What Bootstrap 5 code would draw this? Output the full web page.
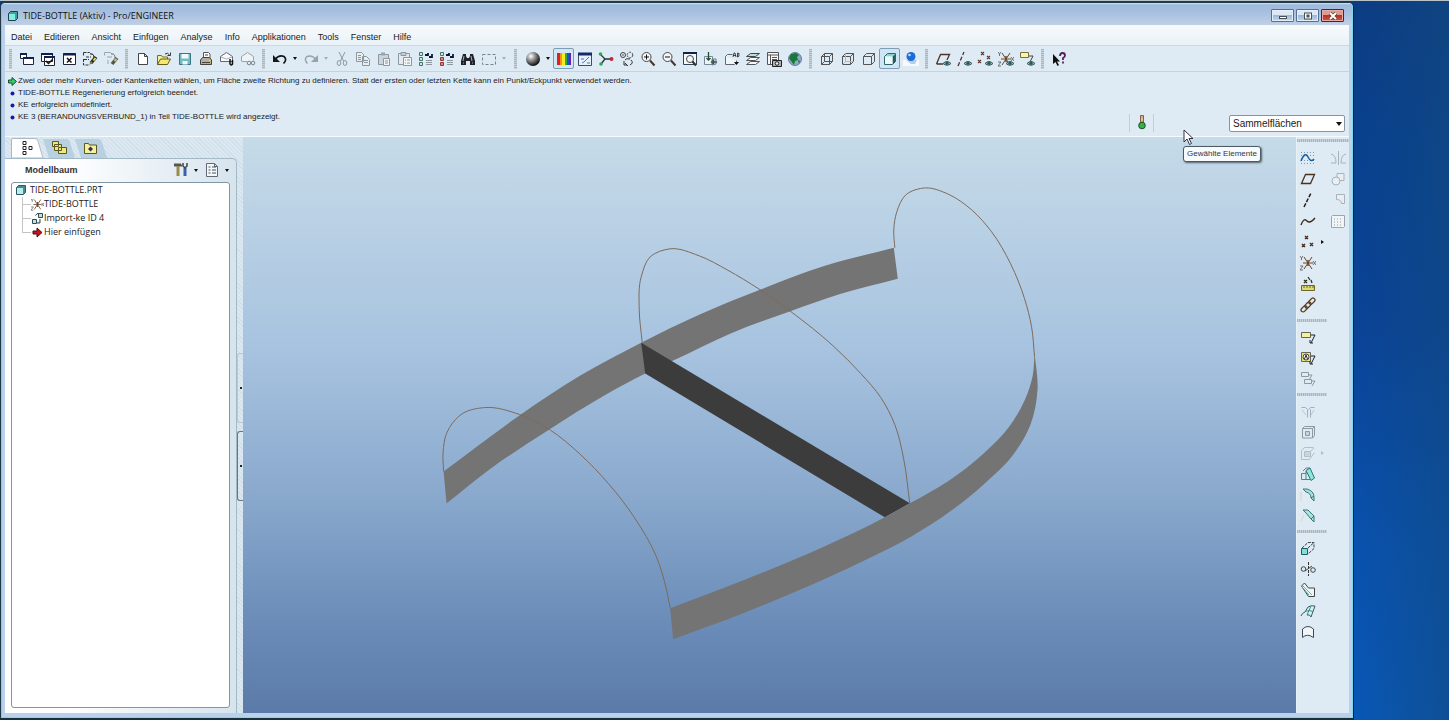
<!DOCTYPE html>
<html lang="de">
<head>
<meta charset="utf-8">
<meta name="viewport" content="width=device-width, initial-scale=1">
<title>TIDE-BOTTLE (Aktiv) - Pro/ENGINEER</title>
<link href="https://cdn.jsdelivr.net/npm/bootstrap@5.3.0/dist/css/bootstrap.min.css" rel="stylesheet">
<style>
  body { font-family: "Liberation Sans", Arial, sans-serif; font-size: 9px; line-height: 12px; color: #222; overflow: hidden;
    background: linear-gradient(to right, rgba(14,72,140,0) 93%, rgba(18,74,128,.6) 100%), linear-gradient(#0c3b82 0, #08408f 20%, #0a4298 45%, #0852b0 75%, #0858b8 100%); }
  .desk { border-top: 1px solid #b8c4c8; padding: 1px 95px 0 0; }
  .win { border: 1px solid #203848; border-bottom: 2px solid #16303c; border-right-color: #08203c; border-radius: 5px 5px 0 0; background: #b9d1ea; padding: 0 4px 5px 4px; box-shadow: inset -1px -1px 0 #7fd8f0, inset 1px 0 0 #a8bcd4; }
  .titlebar { height: 22px; margin: 0 -3px; padding: 3px 8px 0 5px; gap: 3px; border-radius: 4px 4px 0 0; background: linear-gradient(#dfe9f5 0, #9db9dc 8%, #aac2e0 50%, #bfd0e6 100%); }
  .titlebar h1 { font: 9px/16px "Open Sans", sans-serif; color: #111; padding-left: 1px; }
  .capbtns { gap: 2px; }
  .capbtn { width: 23px; height: 13px; padding: 0; border: 1px solid #536f94; border-radius: 1px; line-height: 0; background: linear-gradient(#dce8f5 45%, #9db8d8 50%, #c4d8ee); box-shadow: inset 0 0 0 1px #e4eef8; }
  .capclose { border-color: #5a2020; background: linear-gradient(#e09a90 45%, #b83228 50%, #d0564a); box-shadow: inset 0 0 0 1px #e8aaa4; }
  .menubar { height: 21px; background: linear-gradient(#f6fafc, #eaf2f7); border-bottom: 1px solid #cdd8e0; }
  .menubar a { color: #222; text-decoration: none; padding: 0 6px; line-height: 24px; }
  .toolbar { height: 26px; background: #deebf4; border-bottom: 1px solid #c6d2dc; }
  .grip { width: 11px; flex: none; }
  .grip::before { content: ""; display: block; width: 3px; height: 20px; margin: 0 auto; background: repeating-linear-gradient(#a8b6c0 0 1px, #c6d1d9 1px 2px); }
  .gripwide { width: 13px; }
  .tool { width: 21px; height: 21px; padding: 0; border: 1px solid transparent; background: none; line-height: 0; flex: none; display: flex; align-items: center; justify-content: center; }
  .tool.on { border-color: #7e9cb4; background: #cfe6f6; border-radius: 2px; }
  .drop { width: 10px; height: 21px; flex: none; padding: 0; border: 0; background: none; display: flex; align-items: center; justify-content: center; }
  .drop::after { content: ""; border: 2px solid transparent; border-top: 3px solid #111; border-bottom: 0; }
  .drop:disabled::after { border-top-color: #a6b0b8; }
  .messages { height: 65px; background: #deebf4; border-bottom: 1px solid #f4fafd; padding: 3px 4px 0 3px; }
  .messages ul { font-size: 8px; line-height: 12px; }
  .messages li { display: flex; align-items: center; gap: 1px; height: 12px; }
  .bullet { width: 9px; flex: none; line-height: 0; text-align: center; }
  .lamp { width: 25px; height: 18px; border-left: 1px solid #c2ced8; border-right: 1px solid #c2ced8; margin-right: 75px; text-align: center; line-height: 0; }
  .filter { width: 116px; height: 17px; padding: 0 3px; border: 1px solid #8794a0; border-radius: 2px; font-size: 10px; line-height: 15px; color: #222; appearance: none; background: #fff; }
  .filterbox { position: relative; line-height: 0; }
  .filterbox::after { content: ""; position: absolute; right: 3px; top: 7px; border: 3px solid transparent; border-top: 4px solid #111; border-bottom: 0; }
  svg { fill: none; stroke-width: 1; flex: none; }
  .tipwrap { position: absolute; right: 92px; top: 126px; width: 78px; z-index: 3; line-height: 0; }
  .tip { height: 16px; background: #f8fbfd; border: 1px solid #4c5a66; border-radius: 3px; box-shadow: 1px 1px 2px #54606c; font-size: 8px; line-height: 14px; text-align: center; white-space: nowrap; color: #334; }
  .side { width: 238px; background: repeating-linear-gradient(45deg, #d0e0ea 0 1px, #dbe8f1 1px 3px); }
  .tabs { height: 21px; padding: 1px 0 0 6px; }
  .tabs button { border: 0; background: none; padding: 0; width: 32px; height: 20px; line-height: 0; }
  .panel { border: 1px solid #a4b8c6; border-left: 0; border-bottom: 0; border-radius: 0 5px 0 0; margin-right: 6px; background: linear-gradient(to right, #fff, #fff 25%, #d6e4ee); }
  .phead { height: 22px; padding: 0 4px 0 20px; }
  .phead h2 { font-size: 9px; line-height: 22px; font-weight: bold; color: #333; }
  .tree { margin: 1px 6px 5px 6px; background: #fff; border: 1px solid #8394a2; border-radius: 3px; font: 9px/14px "Open Sans", "Noto Sans", sans-serif; color: #222; }
  .treerow { height: 14px; display: flex; align-items: center; white-space: nowrap; }
  .branch { padding-left: 10px; }
  .branch::before { content: ""; width: 9px; height: 14px; border-left: 1px solid #c4c4c4; background: linear-gradient(#c4c4c4, #c4c4c4) no-repeat 0 7px / 9px 1px; }
  .branch:last-child::before { height: 8px; align-self: flex-start; }
  .handles { width: 6px; margin-left: -6px; padding-top: 216px; gap: 8px; z-index: 1; }
  .handle { width: 6px; border: 1px solid #b8c8d4; border-right: 0; border-radius: 3px 0 0 3px; height: 70px; display: flex; align-items: center; justify-content: center; }
  .handle::after { content: ""; width: 2px; height: 2px; background: #222; }
  .scene { background: linear-gradient(#c6dbe8 0, #bcd3e6 12%, #a6c2df 38%, #8aa9cd 62%, #6d8fba 82%, #5b7aa8 100%); min-width: 0; line-height: 0; }
  .rail { width: 53px; background: #deebf4; padding-top: 2px; border-left: 1px solid #e8f1f6; }
  .railmain { width: 30px; }
  .hgrip { height: 3px; margin: 4px 0; background: repeating-linear-gradient(to right, #a8b6c0 0 1px, #c6d1d9 1px 2px); }
  .hgrip:first-child { margin: 0 0 5px; }
  .hgrip:first-child + .tool { margin-top: 0; }
  .fly { width: 8px; padding: 0; border: 0; background: none; display: flex; align-items: center; justify-content: center; }
  .fly::after { content: ""; border: 2px solid transparent; border-left: 3px solid #111; border-right: 0; }
  .fly:disabled::after { border-left-color: #b4bec6; }
</style>
</head>
<body>
<svg width="0" height="0" class="position-absolute" aria-hidden="true">
  <defs>
    <symbol id="eye" viewBox="0 0 8 5"><path d="M0 2.500Q4-1.500 8 2.500Q4 6 0 2.500Z" fill="#9bbab8" stroke="#456"/><circle cx="4" cy="2.300" r="1.600" fill="#14664e"/></symbol>
    <symbol id="csys" viewBox="0 0 16 16"><path d="M4 2l8 12M12 2L4 14M3 8h10" stroke="#6b4326"/><path d="M8 5v6" stroke="#6b4326" stroke-width="1.500"/><path d="M0 1l1.500 2L3 1M1.500 3v2M0 11h3l-3 4h3M13 6l3 4M16 6l-3 4" stroke="#555" stroke-width=".8"/></symbol>
    <symbol id="cube" viewBox="0 0 16 16"><path d="M2.500 5.500h8v8h-8zM2.500 5.500l3-3h8v8l-3 3M10.500 5.500l3-3"/></symbol>
  </defs>
</svg>
<div class="desk vh-100">
<main class="win h-100 d-flex flex-column position-relative">
  <header class="titlebar d-flex align-items-center flex-shrink-0">
    <svg width="12" height="12" viewBox="0 0 12 12"><path d="M1.500 3.500l2-2h7v7l-2 2h-7z" fill="#4a9a98" stroke="#22404a"/><path d="M2 4h6v6H2z" fill="#7df0e4"/></svg>
    <h1 class="m-0 flex-grow-1">TIDE-BOTTLE (Aktiv) - Pro/ENGINEER</h1>
    <div class="capbtns d-flex">
      <button class="capbtn" aria-label="Minimieren"><svg width="10" height="8" viewBox="0 0 10 8"><rect x="1.500" y="4.500" width="7" height="2" fill="#fff" stroke="#444e5c"/></svg></button>
      <button class="capbtn" aria-label="Maximieren"><svg width="10" height="8" viewBox="0 0 10 8"><rect x="1.500" y="1" width="7" height="6" fill="#fff" stroke="#444e5c"/><rect x="4" y="3" width="2" height="2" fill="#667" stroke="#444e5c"/></svg></button>
      <button class="capbtn capclose" aria-label="Schließen"><svg width="10" height="8" viewBox="0 0 10 8"><path d="M2 1l6 6M8 1L2 7" stroke="#543" stroke-width="3.500"/><path d="M2 1l6 6M8 1L2 7" stroke="#fff" stroke-width="2"/></svg></button>
    </div>
  </header>
  <nav class="menubar d-flex flex-shrink-0" aria-label="Menü">
    <a href="#">Datei</a><a href="#">Editieren</a><a href="#">Ansicht</a><a href="#">Einfügen</a><a href="#">Analyse</a><a href="#">Info</a><a href="#">Applikationen</a><a href="#">Tools</a><a href="#">Fenster</a><a href="#">Hilfe</a>
  </nav>
  <div class="toolbar d-flex align-items-center flex-shrink-0" role="toolbar" aria-label="Werkzeuge">
    <span class="grip"></span>
    <button class="tool" aria-label="Neues Fenster"><svg width="16" height="16" viewBox="0 0 16 16"><path d="M1.500 2.500h6v5h-6zM4.500 6.500h10v7h-10z" fill="#fff" stroke="#223"/><path d="M1 3h7M4 7h11" stroke="#12204c" stroke-width="2"/></svg></button>
    <button class="tool" aria-label="Fenster aktivieren"><svg width="16" height="16" viewBox="0 0 16 16"><path d="M1.500 2.500h11v8h-11zM4.500 5.500h10v9h-10z" fill="#fff" stroke="#223"/><path d="M1 3h12M4 6h11" stroke="#12204c" stroke-width="2"/><path d="M6 10l2.500 2.500 4-4" stroke="#111" stroke-width="1.500"/></svg></button>
    <button class="tool" aria-label="Fenster schließen"><svg width="16" height="16" viewBox="0 0 16 16"><path d="M2.500 2.500h12v11h-12z" fill="#fff" stroke="#223"/><path d="M2 3.500h13" stroke="#12204c" stroke-width="2"/><path d="M6 7l4.500 4.500M10.500 7L6 11.500" stroke="#111" stroke-width="1.500"/></svg></button>
    <button class="tool" aria-label="Sitzung löschen"><svg width="16" height="16" viewBox="0 0 16 16"><path d="M1.500 1.500h6l2 2M1.500 1.500v3M1.500 8v6h5M4 6h5M2 8.500h5" stroke="#333" stroke-dasharray="3 1"/><path d="M8 3q4-1 4 4" stroke="#222"/><path d="M14 6l-5 6" stroke="#2c2c1c" stroke-width="3.500"/><path d="M13.500 7l-2 2.500" stroke="#e6da60" stroke-width="2"/><path d="M9 10l-2 4 4-2" fill="#776"/></svg></button>
    <button class="tool" aria-label="Alte Versionen löschen"><svg width="16" height="16" viewBox="0 0 16 16"><path d="M1.500 1.500h6l2 2M1.500 1.500v3M4 6h5M5 9v4" stroke="#9aa4aa"/><path d="M8 3q4-1 4 4" stroke="#777"/><path d="M14 7l-5 6" stroke="#555" stroke-width="3.500"/><path d="M13.500 8l-2 2" stroke="#d8ca60" stroke-width="2"/></svg></button>
    <span class="grip"></span>
    <button class="tool" aria-label="Neu"><svg width="16" height="16" viewBox="0 0 16 16"><path d="M3.500 2.500h6l3 3v8h-9zM9.500 2.500v3h3" fill="#fff" stroke="#444"/></svg></button>
    <button class="tool" aria-label="Öffnen"><svg width="16" height="16" viewBox="0 0 16 16"><path d="M1.500 13.500v-9h4l1 1.500h5v2" fill="#f8f0a0" stroke="#776a1c"/><path d="M1.500 13.500l3-5.500h10l-3 5.500z" fill="#f4e870" stroke="#665c18"/><path d="M9 3q3-2 4.500 1M14.500 1.500v3h-3" stroke="#333"/></svg></button>
    <button class="tool" aria-label="Speichern"><svg width="16" height="16" viewBox="0 0 16 16"><path d="M2.500 2.500h11v11h-11z" fill="#6fbcc4" stroke="#3b7480"/><path d="M4.500 3h7v4.500h-7zM5.500 10h5v3.500h-5z" fill="#f2f8f6"/></svg></button>
    <button class="tool" aria-label="Drucken"><svg width="16" height="16" viewBox="0 0 16 16"><path d="M5.500 7V1.500h5L12 3v4" fill="#fff" stroke="#555"/><path d="M2.500 9l2-2.500h7l2 2.500v4.500h-11z" fill="#b4aea0" stroke="#45423c"/><path d="M4 11.500h8M7 4h3" stroke="#444" /><path d="M11 9.500h2" stroke="#e8d848"/></svg></button>
    <button class="tool" aria-label="Mail senden"><svg width="16" height="16" viewBox="0 0 16 16"><path d="M1.500 10.500v-5l6-4 6 4v5z" fill="#f8fafa" stroke="#667"/><path d="M2 6l5.500 2L13 6" stroke="#aab"/><path d="M11 8v5q1 2 2.500 0V9" stroke="#111" stroke-width="1.500"/></svg></button>
    <button class="tool" aria-label="Link senden"><svg width="16" height="16" viewBox="0 0 16 16"><path d="M1.500 10.500v-5l6-4 6 4v4M2 10.500h5" fill="#eef3f6" stroke="#99a3aa"/><circle cx="9" cy="12" r="1.800" stroke="#7a848c"/><circle cx="13" cy="12" r="1.800" stroke="#7a848c"/></svg></button>
    <span class="grip"></span>
    <button class="tool" aria-label="Rückgängig"><svg width="16" height="16" viewBox="0 0 16 16"><path d="M3 8.500q4-5 9-3 3.500 3-.5 7" stroke="#14181c" stroke-width="1.700"/><path d="M1 4v7h7z" fill="#14181c"/></svg></button><button class="drop" aria-label="Rückgängig-Liste"></button>
    <button class="tool" disabled aria-label="Wiederherstellen"><svg width="16" height="16" viewBox="0 0 16 16"><path d="M13 8.500q-4-5-9-3-3.500 3 .5 7" stroke="#98a2aa" stroke-width="1.500"/><path d="M15 4v7H8z" fill="#98a2aa"/></svg></button><button class="drop" disabled aria-label="Wiederherstellen-Liste"></button>
    <button class="tool" disabled aria-label="Ausschneiden"><svg width="16" height="16" viewBox="0 0 16 16"><path d="M5 1l4.500 9M11 1L6.500 10" stroke="#8d979e"/><ellipse cx="5" cy="12" rx="1.800" ry="2.500" stroke="#8d979e"/><ellipse cx="11" cy="12" rx="1.800" ry="2.500" stroke="#8d979e"/></svg></button>
    <button class="tool" disabled aria-label="Kopieren"><svg width="16" height="16" viewBox="0 0 16 16"><path d="M1.500 1.500h5l2 2v7h-7zM7.500 5.500h4l3 3v6h-7z" fill="#e8eef2" stroke="#8d979e"/><path d="M3 4.500h3M3 6.500h3M3 8.500h3M9 9.500h4M9 11.500h4" stroke="#8d979e"/></svg></button>
    <button class="tool" disabled aria-label="Einfügen"><svg width="16" height="16" viewBox="0 0 16 16"><path d="M2.500 3.500h10v10h-10z" fill="#ccd5dc" stroke="#8d979e"/><path d="M5 1.500h4v3H5z" fill="#9aa4ac"/><path d="M7.500 7.500h6v7h-6zM9 10h3M9 12h3" fill="#f0f4f6" stroke="#8d979e"/></svg></button>
    <button class="tool" disabled aria-label="Spezial einfügen"><svg width="16" height="16" viewBox="0 0 16 16"><path d="M1.500 2.500h11v11h-11z" fill="#e4eaee" stroke="#8d979e"/><path d="M4 1.500h5v3H4z" fill="#c4ccd2" stroke="#8d979e"/><path d="M6.500 6.500h8v8h-8zM8 9h1M10 9h3M8 12h1M10 12h3" fill="#f4f7f8" stroke="#8d979e"/></svg></button>
    <button class="tool" aria-label="Regenerieren"><svg width="16" height="16" viewBox="0 0 16 16"><path d="M1.500 1.500h3v3h-3zM1.500 6.500h3v3h-3zM1.500 11.500h3v3h-3z" fill="#c8ece4" stroke="#487468"/><path d="M7 4h3V2M14 3v3h-3" stroke="#0b1640" stroke-width="1.800"/><path d="M8 9.500h6M8 11.500h6M8 13.500h6" stroke="#8e999f"/></svg></button>
    <button class="tool" aria-label="Regenerierungsmanager"><svg width="16" height="16" viewBox="0 0 16 16"><path d="M1.500 1.500h3v3h-3z" fill="#c8ece4" stroke="#487468"/><path d="M1.500 6.500h3v3h-3zM1.500 11.500h3v3h-3z" fill="#d88884" stroke="#8c3c38"/><path d="M7 4h3V2M14 3v3h-3" stroke="#0b1640" stroke-width="1.800"/><path d="M8 9.500h6M8 11.500h6M8 13.500h6" stroke="#8e999f"/></svg></button>
    <button class="tool" aria-label="Suchen"><svg width="16" height="16" viewBox="0 0 16 16"><path d="M3 3h3v2l1 2h2l1-2V3h3l2 7v4h-5v-4H6v4H1v-4z" fill="#202428"/><path d="M4 5l-1 5M11 5l1 5M3 12h1M12 12h1" stroke="#aab"/></svg></button>
    <button class="tool" aria-label="Auswahlrahmen"><svg width="16" height="16" viewBox="0 0 16 16"><rect x="1.500" y="3.500" width="13" height="10" stroke="#78838a" stroke-dasharray="3 2"/></svg></button><button class="drop" disabled aria-label="Auswahlliste"></button>
    <span class="grip gripwide"></span>
    <button class="tool" aria-label="Farben"><svg width="16" height="16" viewBox="0 0 16 16"><defs><radialGradient id="ball" cx=".35" cy=".3" r=".7"><stop offset="0" stop-color="#fff"/><stop offset=".4" stop-color="#999"/><stop offset="1" stop-color="#111"/></radialGradient></defs><circle cx="8" cy="8" r="7" fill="url(#ball)"/></svg></button><button class="drop" aria-label="Farbliste"></button>
    <button class="tool on" aria-label="Spektrum"><svg width="16" height="16" viewBox="0 0 16 16"><path d="M2.500 2v12" stroke="#e02020" stroke-width="3"/><path d="M5 2v12" stroke="#f09020" stroke-width="2"/><path d="M7.500 2v12" stroke="#f4ec20" stroke-width="3"/><path d="M10 2v12" stroke="#28b030" stroke-width="2"/><path d="M12 2v12" stroke="#2050d8" stroke-width="2"/><path d="M14 2v12" stroke="#6a20a8" stroke-width="2"/></svg></button>
    <button class="tool" aria-label="Neu zeichnen"><svg width="16" height="16" viewBox="0 0 16 16"><path d="M1.500 2.500h13v12h-13z" fill="#e4f0fa" stroke="#3c4c70"/><path d="M1 3h14" stroke="#14286c" stroke-width="3"/><path d="M12 6l-5 5-2 1M4 8h3M10 12h3" stroke="#5878a0"/></svg></button>
    <button class="tool" aria-label="Drehzentrum"><svg width="16" height="16" viewBox="0 0 16 16"><path d="M2 3l5 5-4 5M7 8h7" stroke="#233" stroke-width="1.300"/><circle cx="2.500" cy="3" r="1.800" fill="#30a850"/><circle cx="3" cy="13" r="1.800" fill="#30a850"/><circle cx="13.500" cy="8" r="2" fill="#c02838"/></svg></button>
    <button class="tool" aria-label="Orientierungsmodus"><svg width="16" height="16" viewBox="0 0 16 16"><circle cx="4" cy="4" r="2.500" stroke="#444"/><circle cx="4" cy="4" r=".8" fill="#444"/><circle cx="11" cy="4" r="2.800" stroke="#444" stroke-dasharray="2 1"/><path d="M6 9q1-2 5-1M6 12l3 3M5 10v4h3M12 9q3 3-1 5" stroke="#333"/></svg></button>
    <button class="tool" aria-label="Vergrößern"><svg width="16" height="16" viewBox="0 0 16 16"><circle cx="6.500" cy="6" r="4.500" fill="#f4f8fa" stroke="#444"/><path d="M4 6h5M6.500 3.500v5" stroke="#111"/><path d="M10 9.500l4.500 5" stroke="#443830" stroke-width="2"/></svg></button>
    <button class="tool" aria-label="Verkleinern"><svg width="16" height="16" viewBox="0 0 16 16"><circle cx="6.500" cy="6" r="4.500" fill="#f4f8fa" stroke="#444"/><path d="M4 6h5" stroke="#111"/><path d="M10 9.500l4.500 5" stroke="#443830" stroke-width="2"/></svg></button>
    <button class="tool" aria-label="Einpassen"><svg width="16" height="16" viewBox="0 0 16 16"><path d="M1.500 1.500h13v12h-13z" fill="#f4f8fa" stroke="#345"/><path d="M1 2h14" stroke="#14204c" stroke-width="2"/><circle cx="8" cy="8" r="3.500" stroke="#444"/><path d="M10.500 10.500l3.500 4" stroke="#332" stroke-width="2"/></svg></button>
    <button class="tool" aria-label="Umorientieren"><svg width="16" height="16" viewBox="0 0 16 16"><path d="M1.500 5.500h8v8h-8z" fill="#eef4f6" stroke="#789"/><path d="M5.500 1v8M3.500 7l2 2 2-2M14 11H8M11 9l-2.500 2L11 13" stroke="#234a3c" stroke-width="1.300"/><path d="M9 8v6l4-1V8z" stroke="#678"/></svg></button>
    <button class="tool" aria-label="Gespeicherte Ansichten"><svg width="16" height="16" viewBox="0 0 16 16"><path d="M1.500 5.500l2-2h5M1.500 5.500v8h9l2-2v-2" fill="#f0f5f7" stroke="#667"/><path d="M9 6l1-4h1l1 4M9 4.500h3M13.500 6V2q3 0 1 2 2 1-1 2" stroke="#222" stroke-width=".8"/><path d="M10 11h5l-2.500 3z" fill="#111"/></svg></button>
    <button class="tool" aria-label="Layer"><svg width="16" height="16" viewBox="0 0 16 16"><path d="M1.500 13.500l4-3h9l-4 3zM1.500 9.500l4-3h9l-4 3z" fill="#f4f8fa" stroke="#555"/><path d="M1.500 5.500l4-3h9l-4 3z" fill="#b8e0dc" stroke="#444"/></svg></button>
    <button class="tool" aria-label="Ansichtsmanager"><svg width="16" height="16" viewBox="0 0 16 16"><path d="M1.500 1.500h11v12h-11zM1.500 4h11M4.500 4v10M6 6.500h5M6 8.500h5" fill="#f4f8fa" stroke="#555"/><path d="M6.500 9.500h9v6h-9z" fill="#b0b4b4" stroke="#222"/><circle cx="11" cy="12.500" r="1.800" fill="#eee" stroke="#222"/></svg></button>
    <button class="tool" aria-label="Szene"><svg width="16" height="16" viewBox="0 0 16 16"><circle cx="8" cy="8" r="6.500" fill="#8fa6c8" stroke="#6a7ca0"/><path d="M4 3l5-1 3 2-2 2 1 3-3 1-1 4-3-4-2-3z" fill="#187838"/><path d="M11 9l2 1-1 3z" fill="#187838"/></svg></button>
    <span class="grip"></span>
    <button class="tool" aria-label="Drahtmodell"><svg width="16" height="16" viewBox="0 0 16 16" stroke="#555"><use href="#cube"/><path d="M5.500 2.500v8h8M5.500 10.500l-3 3"/></svg></button>
    <button class="tool" aria-label="Verdeckte Kanten"><svg width="16" height="16" viewBox="0 0 16 16" stroke="#555"><use href="#cube"/><path d="M5.500 2.500v8h8M5.500 10.500l-3 3" stroke="#b0bac2"/></svg></button>
    <button class="tool" aria-label="Keine verdeckten Kanten"><svg width="16" height="16" viewBox="0 0 16 16" stroke="#555"><use href="#cube"/></svg></button>
    <button class="tool on" aria-label="Schattiert"><svg width="16" height="16" viewBox="0 0 16 16"><path d="M10.500 5.500l3-3v8l-3 3z" fill="#2a5a60"/><path d="M2.500 5.500l3-3h8l-3 3z" fill="#82d8d0"/><path d="M2.500 5.500h8v8h-8z" fill="#e8fafa"/><path d="M2.500 5.500l3-3h8v8l-3 3h-8z" stroke="#35646a"/></svg></button>
    <button class="tool" aria-label="Erweiterte Realität"><svg width="16" height="16" viewBox="0 0 16 16"><path d="M0 9h16v6H0z" fill="#f6fafe"/><path d="M3 9h11l-2 4H8z" fill="#b8cce4"/><circle cx="8" cy="5.500" r="4.500" fill="#1c6cd8"/><circle cx="6.500" cy="4" r="1.300" fill="#b8dcff"/></svg></button>
    <span class="grip"></span>
    <button class="tool" aria-label="Ebenen anzeigen"><svg width="16" height="16" viewBox="0 0 16 16"><path d="M1.500 13l4-9.500h9L12 9M1.500 13H8" stroke="#4c3428" stroke-width="1.300"/><use href="#eye" x="8" y="10" width="8" height="5"/></svg></button>
    <button class="tool" aria-label="Achsen anzeigen"><svg width="16" height="16" viewBox="0 0 16 16"><path d="M2 15L8 1" stroke="#4c3428" stroke-width="1.300" stroke-dasharray="4 2"/><use href="#eye" x="8" y="10" width="8" height="5"/></svg></button>
    <button class="tool" aria-label="Punkte anzeigen"><svg width="16" height="16" viewBox="0 0 16 16"><path d="M4 1l3 3M7 1L4 4M1 9l3 3M4 9l-3 3M10 5l3 3M13 5l-3 3" stroke="#5c3428" stroke-width="1.200"/><use href="#eye" x="8" y="10" width="8" height="5"/></svg></button>
    <button class="tool" aria-label="Koordinatensysteme anzeigen"><svg width="16" height="16" viewBox="0 0 16 16"><use href="#csys" width="16" height="16"/><use href="#eye" x="8" y="10" width="8" height="5"/></svg></button>
    <button class="tool" aria-label="Notizen anzeigen"><svg width="16" height="16" viewBox="0 0 16 16"><path d="M1.500 1.500h8v5h-8z" fill="#f8f4b0" stroke="#777040"/><path d="M10 5h4l-3 6" stroke="#444"/><use href="#eye" x="8" y="10" width="8" height="5"/></svg></button>
    <span class="grip"></span>
    <button class="tool" aria-label="Kontexthilfe"><svg width="16" height="16" viewBox="0 0 16 16"><path d="M2 3v10l2.500-2 2 4 1.500-1-2-3.500h3z" fill="#111"/><path d="M9 5q0-3 2.500-3t2.500 2.500q0 1.500-2 2.500v2M12 10.500v2" stroke="#5c1c58" stroke-width="1.800"/></svg></button>
  </div>
  <section class="messages d-flex justify-content-between flex-shrink-0">
    <ul class="list-unstyled m-0">
      <li><span class="bullet"><svg width="9" height="9" viewBox="0 0 9 9"><path d="M.5 3h3.500V.5l4.500 4L4 8.500V6H.5z" fill="#38c870" stroke="#14502c"/></svg></span>Zwei oder mehr Kurven- oder Kantenketten wählen, um Fläche zweite Richtung zu definieren. Statt der ersten oder letzten Kette kann ein Punkt/Eckpunkt verwendet werden.</li>
      <li><span class="bullet"><svg width="5" height="5"><circle cx="2.500" cy="2.500" r="2" fill="#1818b0"/></svg></span>TIDE-BOTTLE Regenerierung erfolgreich beendet.</li>
      <li><span class="bullet"><svg width="5" height="5"><circle cx="2.500" cy="2.500" r="2" fill="#1818b0"/></svg></span>KE erfolgreich umdefiniert.</li>
      <li><span class="bullet"><svg width="5" height="5"><circle cx="2.500" cy="2.500" r="2" fill="#1818b0"/></svg></span>KE 3 (BERANDUNGSVERBUND_1) in Teil TIDE-BOTTLE wird angezeigt.</li>
    </ul>
    <div class="d-flex align-items-end pb-1">
      <div class="lamp"><svg width="10" height="16" viewBox="0 0 10 16"><path d="M3.500 1.500h3v8h-3z" fill="#d8a890" stroke="#8a6048"/><path d="M4 5.500h2" stroke="#e8d860" stroke-width="2"/><circle cx="5" cy="11.500" r="3.300" fill="#38b048" stroke="#145424"/></svg></div>
      <div class="filterbox"><select class="filter" aria-label="Auswahlfilter"><option>Sammelflächen</option></select></div>
    </div>
  </section>
  <div class="d-flex flex-grow-1">
    <aside class="side d-flex flex-column flex-shrink-0">
      <div class="tabs d-flex" role="tablist">
        <button role="tab" aria-selected="true" aria-label="Modellbaum"><svg width="32" height="20" viewBox="0 0 32 20"><path d="M.5 20V2Q.5.500 2 .500h22Q26 .500 27 3l5 17z" fill="#fff" stroke="#a8bac6"/><path d="M12 3.500h3v3h-3zM12 8.500h3v3h-3zM12 13.500h3v3h-3zM18 8.500h3v3h-3z" stroke="#222"/></svg></button>
        <button role="tab" aria-label="Ordnernavigator"><svg width="32" height="20" viewBox="0 0 32 20"><path d="M0 1h23q3 0 4 3l5 16H6z" fill="#b9d0e0"/><path d="M9.500 3.500h6v5h-6zM11.500 6.500h7v6h-7zM15.500 9.500h8v6h-8z" fill="#f0e878" stroke="#5c5820"/></svg></button>
        <button role="tab" aria-label="Favoriten"><svg width="32" height="20" viewBox="0 0 32 20"><path d="M0 1h23q3 0 4 3l5 16H6z" fill="#b9d0e0"/><path d="M9.500 15.500v-10h4l1 1.500h7v8.500z" fill="#f4f0a0" stroke="#5c5820"/><path d="M15.500 8.500l2.500 2.500-2.500 2.500-2.500-2.500z" fill="#334"/></svg></button>
      </div>
      <div class="panel d-flex flex-column flex-grow-1">
        <div class="phead d-flex align-items-center">
          <h2 class="m-0 flex-grow-1">Modellbaum</h2>
          <button class="tool" aria-label="Einstellungen"><svg width="16" height="16" viewBox="0 0 16 16"><path d="M1 3.500h8M1 2.500h7" stroke="#555" stroke-width="2"/><path d="M5 4v10" stroke="#9a8a50" stroke-width="3"/><path d="M12 6v8" stroke="#3a62a8" stroke-width="3"/><path d="M10 1v3l2 2 2-2V1" stroke="#444" stroke-width="1.500"/></svg></button><button class="drop" aria-label="Einstellungsliste"></button>
          <button class="tool" aria-label="Anzeigen"><svg width="16" height="16" viewBox="0 0 16 16"><path d="M2.500 1.500h8l3 3v10h-11zM10.500 1.500v3h3" fill="#f4f7f8" stroke="#667"/><path d="M4.500 5h2M8 5h4M4.500 8h2M8 8h4M4.500 11h2M8 11h4" stroke="#456"/></svg></button><button class="drop" aria-label="Anzeigeliste"></button>
        </div>
        <div class="tree flex-grow-1">
          <div class="treerow ps-1"><svg class="me-1" width="10" height="10" viewBox="0 0 10 10"><path d="M.5 2.500l2-2h7v7l-2 2h-7z" fill="#4a8a90" stroke="#356"/><path d="M1 3h6v6H1z" fill="#b4f0ea"/></svg>TIDE-BOTTLE.PRT</div>
          <ul class="list-unstyled m-0">
            <li class="treerow branch"><svg width="13" height="13"><use href="#csys"/></svg>TIDE-BOTTLE</li>
            <li class="treerow branch"><svg width="13" height="13" viewBox="0 0 13 13"><path d="M4.500 3.500q1-3 5-2M1.500 7.500h4v4h-4zM7.500 1.500h4v4h-4zM6 11h3V7" fill="#bfe4e0" stroke="#2c4a50"/></svg>Import-ke ID 4</li>
            <li class="treerow branch"><svg width="13" height="11" viewBox="0 0 13 11"><path d="M2 4h4V1l5 4.500L6 10V7H2z" fill="#c01420" stroke="#500c10"/></svg>Hier einfügen</li>
          </ul>
        </div>
      </div>
    </aside>
    <div class="handles d-flex flex-column flex-shrink-0"><span class="handle"></span><span class="handle border-secondary"></span></div>
    <div class="scene flex-grow-1 position-relative">
      <svg id="model" class="position-absolute w-100 h-100" viewBox="243 136 1053 577" role="img" aria-label="TIDE-BOTTLE"></svg>
    </div>
    <aside class="rail d-flex flex-shrink-0" aria-label="Konstruktionselemente">
      <div class="railmain flex-shrink-0">
        <div class="hgrip"></div>
        <button class="tool" aria-label="Skizze"><svg width="16" height="16" viewBox="0 0 16 16"><path d="M1 2.500h14M1 5.500h14M1 10.500h14M1 13.500h14" stroke="#789cc0" stroke-dasharray="1 2"/><path d="M1 11q4-10 7-4t6 2" stroke="#1c5c9c" stroke-width="1.500"/></svg></button>
        <button class="tool" aria-label="Ebene"><svg width="16" height="16" viewBox="0 0 16 16"><path d="M1.500 12.500l4-9h9l-4 9z" stroke="#4c3020" stroke-width="1.300"/></svg></button>
        <button class="tool" aria-label="Achse"><svg width="16" height="16" viewBox="0 0 16 16"><path d="M4 15l7-14" stroke="#2c1c14" stroke-width="1.500" stroke-dasharray="4 1.500"/></svg></button>
        <button class="tool" aria-label="Kurve"><svg width="16" height="16" viewBox="0 0 16 16"><path d="M1 12q3-8 6-4 3 3 8-3" stroke="#3c281c" stroke-width="1.400"/></svg></button>
        <div class="d-flex"><button class="tool" aria-label="Punkt"><svg width="16" height="16" viewBox="0 0 16 16"><path d="M5 2l3 3M8 2L5 5M2 10l3 3M5 10l-3 3M10 9l3 3M13 9l-3 3" stroke="#4c3020" stroke-width="1.500"/></svg></button><button class="fly" aria-label="Weitere Punkte"></button></div>
        <button class="tool" aria-label="Koordinatensystem"><svg width="16" height="16"><use href="#csys"/></svg></button>
        <button class="tool" aria-label="Analyse"><svg width="16" height="16" viewBox="0 0 16 16"><path d="M4 4l3 3M7 4L4 7M8 1l2 3M11 4l1 3" stroke="#332" stroke-width="1.300"/><path d="M1.500 9.500h13v5h-13z" fill="#ddd878" stroke="#6c6828"/><path d="M4 10v2M7 10v2M10 10v2M13 10v2" stroke="#6c6828"/></svg></button>
        <button class="tool" aria-label="Referenz"><svg width="16" height="16" viewBox="0 0 16 16"><g transform="rotate(-45 8 8)" stroke="#5c3c20" stroke-width="1.300"><rect x="-1" y="6" width="7" height="4" rx="2"/><rect x="4.500" y="6" width="7" height="4" rx="2"/><rect x="10" y="6" width="7" height="4" rx="2"/></g></svg></button>
        <div class="hgrip"></div>
        <button class="tool" aria-label="Notiz"><svg width="16" height="16" viewBox="0 0 16 16"><path d="M1.500 3.500h9v5h-9z" fill="#f4f0a0" stroke="#665"/><path d="M11 6h4l-4 8M10 11v3h3" stroke="#222"/></svg></button>
        <button class="tool" aria-label="Symbol"><svg width="16" height="16" viewBox="0 0 16 16"><path d="M1.500 2.500h9v9h-9z" fill="#e8e478" stroke="#665"/><circle cx="6" cy="7" r="3" fill="#fff" stroke="#444"/><path d="M4.500 9L6 5l1.500 4M11 6h4l-4 8M10 11v3h3" stroke="#222"/></svg></button>
        <button class="tool" aria-label="Weitergabe"><svg width="16" height="16" viewBox="0 0 16 16"><path d="M1.500 1.500h7v4h-7zM4.500 8.500h7v4h-7zM9 4h3l-3 5M12 10h3l-3 5" stroke="#8e999f"/></svg></button>
        <div class="hgrip"></div>
        <button class="tool" disabled aria-label="Bohrung"><svg width="16" height="16" viewBox="0 0 16 16"><path d="M1.500 4.500h4l2 2v8M14.500 4.500h-4l-2 2M10.500 6.500v8" stroke="#a4aeb4"/><path d="M2 7l4 5M14 7l-3 5" stroke="#c0c8ce"/></svg></button>
        <button class="tool" disabled aria-label="Schale"><svg width="16" height="16" viewBox="0 0 16 16"><path d="M2.500 4.500l2-2h10v9l-2 2.500h-10zM2.500 4.500h10V14M12.500 4.500l2-2" stroke="#8e999f"/><path d="M5.500 7.500h4v4h-4z" fill="#c8d2d8" stroke="#8e999f"/></svg></button>
        <div class="d-flex"><button class="tool" disabled aria-label="Rippe"><svg width="16" height="16" viewBox="0 0 16 16"><path d="M1.500 5.500l3-3h9M1.500 5.500v9h8l5-7" stroke="#b4bec4"/><path d="M4.500 6.500h6v5h-6z" fill="#ccd5db" stroke="#b4bec4"/><path d="M10 7l4-4" stroke="#b4bec4"/></svg></button><button class="fly" disabled aria-label="Weitere Rippen"></button></div>
        <button class="tool" aria-label="Schräge"><svg width="16" height="16" viewBox="0 0 16 16"><path d="M1.500 13.500V7.500h4M3 5l3-3h4l-4.500 5.500M1.500 13.500h5" stroke="#777"/><path d="M6 4.500L10 2l4.500 10-3.500 2.500z" fill="#90e6de" stroke="#2c7474"/><path d="M6 5v8.500h5" stroke="#3c8c88"/></svg></button>
        <button class="tool" aria-label="Rundung"><svg width="16" height="16" viewBox="0 0 16 16"><path d="M3 2h4q7 2 7 8v4l-3-3q0-5-5-6z" fill="#a0e4de" stroke="#427476"/><path d="M11 11l3-2" stroke="#427476"/><path d="M1 5v9" stroke="#dcd4b8"/></svg></button>
        <button class="tool" aria-label="Fase"><svg width="16" height="16" viewBox="0 0 16 16"><path d="M3 2h5l6 6v6l-3-3-5-6z" fill="#a4e4de" stroke="#427476"/><path d="M11 11l3-3" stroke="#427476"/><path d="M1 13l3-6" stroke="#dcd4b8"/></svg></button>
        <div class="hgrip"></div>
        <button class="tool" aria-label="Extrudieren"><svg width="16" height="16" viewBox="0 0 16 16"><path d="M2 8l6-5.500h6v6L8 14M8 8l6-5.500" stroke="#444" stroke-dasharray="3 1"/><path d="M1.500 8.500h6v6h-6z" fill="#80e0d8" stroke="#245c5c"/></svg></button>
        <button class="tool" aria-label="Drehen"><svg width="16" height="16" viewBox="0 0 16 16"><path d="M8.500 1v14" stroke="#333" stroke-dasharray="3 1"/><circle cx="3.500" cy="8" r="2.300" stroke="#444"/><circle cx="13" cy="9" r="2.300" stroke="#444"/><path d="M5 10l7-5" stroke="#444"/></svg></button>
        <button class="tool" aria-label="Zug-Verbund"><svg width="16" height="16" viewBox="0 0 16 16"><path d="M1.500 4l3-3 4 5h6v8.500h-6z" fill="#eef5f6" stroke="#444"/><path d="M2 3l10 10M2 5l7 8" stroke="#48a8a0"/><path d="M4 5l8 8" stroke="#d08880"/></svg></button>
        <button class="tool" aria-label="Berandungsverbund"><svg width="16" height="16" viewBox="0 0 16 16"><path d="M1 13q1-3 4-4l3-5q3-2 7-1l-4 11q-1-3-4-2" fill="#d4f2ee" stroke="#3c5c60"/><path d="M5 8.500q4-2 8 0M11 3L7 12" stroke="#3c8c8c"/></svg></button>
        <button class="tool" aria-label="Stil"><svg width="16" height="16" viewBox="0 0 16 16"><path d="M2.500 13.500V5Q8 0 13.500 5v8.500Q7 9 2.500 13.500z" fill="#f0f6f8" stroke="#445"/></svg></button>
      </div>
      <div class="flex-grow-1">
        <div class="hgrip"></div>
        <button class="tool" disabled aria-label="Spiegeln"><svg width="16" height="16" viewBox="0 0 16 16"><path d="M8.500 1v14M1 4q5 1 5 9H1M16 4q-5 1-5 9h5" stroke="#a8b2b8"/></svg></button>
        <button class="tool" disabled aria-label="Zusammenführen"><svg width="16" height="16" viewBox="0 0 16 16"><path d="M7 6V2.500h7v7h-4" fill="#e8eef2" stroke="#a8b2b8"/><circle cx="6" cy="10" r="4" fill="#e8eef2" stroke="#a8b2b8"/></svg></button>
        <button class="tool" disabled aria-label="Trimmen"><svg width="16" height="16" viewBox="0 0 16 16"><path d="M6.500 2.500h8v9h-3q0-4-5-4z" fill="#e8eef2" stroke="#a8b2b8"/></svg></button>
        <button class="tool" disabled aria-label="Muster"><svg width="16" height="16" viewBox="0 0 16 16"><path d="M1.500 3.500l1-1h12v11l-1 1h-12z" fill="#f2f5f7" stroke="#9aa4aa"/><path d="M4 6h8M4 9h8M4 12h8" stroke="#8e999f" stroke-dasharray="1 2"/></svg></button>
      </div>
    </aside>
  </div>
  <div class="tipwrap">
    <svg width="12" height="17" viewBox="0 0 12 17"><path d="M1 1v12l3-3 2.500 5.500 2-1L6 9.500h4z" fill="#fff" stroke="#334"/></svg>
    <div class="tip" role="tooltip">Gewählte Elemente</div>
  </div>
</main>
</div>
<script src="https://cdn.jsdelivr.net/npm/bootstrap@5.3.0/dist/js/bootstrap.bundle.min.js"></script>
<script>
  // Smooth path through model points, tangents weighted by chord length
  function spline(p, start) {
    const dist = (a, b) => Math.hypot(a[0] - b[0], a[1] - b[1]) || 1;
    const tangent = i => {
      const b = p[i], a = p[i - 1] || b, c = p[i + 1] || b;
      if (a === b || c === b) { const l = dist(a, c); return [(c[0] - a[0]) / l, (c[1] - a[1]) / l]; }
      const u = dist(a, b), v = dist(b, c);
      return [0, 1].map(k => ((b[k] - a[k]) / u * v + (c[k] - b[k]) / v * u) / (u + v));
    };
    let d = (start || 'M') + p[0].join(' ');
    for (let i = 0; i < p.length - 1; i++) {
      const b = p[i], c = p[i + 1], l = dist(b, c) / 3, s = tangent(i), t = tangent(i + 1);
      d += `C${b[0] + s[0] * l} ${b[1] + s[1] * l} ${c[0] - t[0] * l} ${c[1] - t[1] * l} ${c[0]} ${c[1]}`;
    }
    return d;
  }
  const backTop = [[443,471],[519,415],[580,375],[641,342],[699,314],[760,289],[825,265],[894,247]];
  const backLow = [[898,278],[841,293],[789,311],[730,333],[673,360],[645,373],[604,395],[549,429],[489,469],[446,503]];
  const frontIn = [[1035,352],[1033,376],[1025,400],[1009,427],[984,453],[948,481],[910,503],[885,517],[825,546],[766,571],[715,591],[670,608]];
  const frontOut = [[673,639],[738,615],[806,587],[865,560],[912,536],[952,510],[984,484],[1013,455],[1031,424],[1038,389],[1035,352]];
  const curves = [
    [[443,471],[442.5,452],[446,433],[462,413],[485,407],[519,414],[549,429],[580,454],[608,483],[634,517],[656,556],[666,588],[670,608]],
    [[642,342],[639,309],[641,276],[650,256],[670,248],[699,255],[727,269],[760,289],[791,311],[833,345],[861,373],[881,397],[895,424],[904,459],[910,503]],
    [[895,247],[894,229],[897,211],[906,194],[926,187],[948,193],[972,209],[992,231],[1011,263],[1025,298],[1032,326],[1035,356]]
  ];
  let out = `<path d="${spline(backTop)}${spline(backLow, 'L')}Z" fill="#747474"/>`;
  out += '<path d="M641 342L910 503 885 517 645 373Z" fill="#3c3c3c"/>';
  out += `<path d="${spline(frontIn)}${spline(frontOut, 'L')}Z" fill="#747474"/>`;
  curves.forEach(c => out += `<path d="${spline(c)}" stroke="#7c6a5c"/>`);
  document.getElementById('model').innerHTML = out;
</script>
</body>
</html>
